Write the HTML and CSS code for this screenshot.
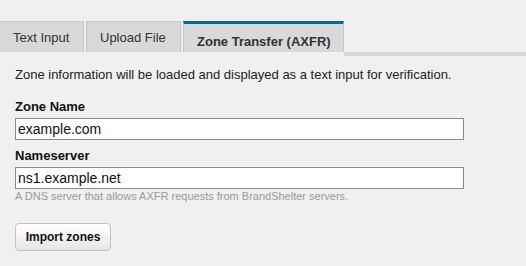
FILE: index.html
```html
<!DOCTYPE html>
<html lang="en">
<head>
	<meta charset="UTF-8">
	<title>Zone import</title>
	<link rel="stylesheet" href="styles.css">
</head>
<body>

	<!-- Abas -->
	<div class="abas">
		<div class="aba texto-aba">Text Input</div>
		<div class="aba envio">Upload File</div>
		<div class="aba ativa">Zone Transfer (AXFR)</div>
		<div class="resto"></div>
	</div>

	<!-- Formulario -->
	<div class="conteudo">
		<p class="intro">Zone information will be loaded and displayed as a text input for verification.</p>

		<div class="campo">
			<label class="rotulo" for="zona">Zone Name</label>
			<input class="texto" id="zona" type="text" value="example.com">
		</div>

		<div class="campo">
			<label class="rotulo" for="ns">Nameserver</label>
			<input class="texto" id="ns" type="text" value="ns1.example.net">
			<div class="ajuda">A DNS server that allows AXFR requests from BrandShelter servers.</div>
		</div>

		<button class="botao">Import zones</button>
	</div>

</body>
</html>
```

FILE: styles.css
```css
	* {
		box-sizing: border-box;
	}

	body {
		margin: 0;
		background-color: #f0f0f0;
		font-family: "Liberation Sans", Arial, sans-serif;
		color: #222222;
	}

	div.abas {
		display: flex;
		padding-top: 21px;
	}

	div.aba {
		height: 31px;
		margin-right: 2px;
		margin-bottom: 4px;
		padding: 8px 0 0 13px;
		background-color: #d9d9d9;
		border: 1px solid #c6c6c6;
		border-bottom: none;
		font-size: 13px;
		line-height: 15px;
		color: #333333;
		white-space: nowrap;
	}

	div.texto-aba {
		width: 84px;
		border-left: none;
	}

	div.envio {
		width: 95px;
	}

	div.aba.ativa {
		width: 161px;
		margin-right: 0;
		border-top: 3px solid #00679b;
		padding-top: 10px;
		font-weight: bold;
	}

	div.resto {
		flex: 1;
		align-self: flex-end;
		height: 4px;
		background-color: #d9d9d9;
	}

	div.conteudo {
		padding: 0 15px;
	}

	p.intro {
		margin: 11px 0 0 0;
		font-size: 13px;
		line-height: 16px;
	}

	div.campo {
		margin-top: 16px;
	}

	label.rotulo {
		display: block;
		font-size: 13px;
		font-weight: bold;
		line-height: 16px;
		color: #111111;
		margin-bottom: 3px;
	}

	input.texto {
		display: block;
		width: 449px;
		height: 22px;
		margin: 0;
		padding: 1px 2px;
		border: 1px solid #8a8a8a;
		background-color: #ffffff;
		font-family: "Liberation Sans", Arial, sans-serif;
		font-size: 14px;
		color: #111111;
	}

	div.campo + div.campo {
		margin-top: 8px;
	}

	div.ajuda {
		font-size: 11px;
		line-height: 13px;
		color: #999999;
		margin-top: 1px;
	}

	button.botao {
		display: block;
		margin-top: 20px;
		width: 96px;
		height: 28px;
		padding: 0;
		border: 1px solid #c2c2c2;
		border-radius: 4px;
		background: linear-gradient(#ffffff, #e6e6e6);
		font-family: "Liberation Sans", Arial, sans-serif;
		font-size: 12px;
		font-weight: bold;
		color: #111111;
	}
```
